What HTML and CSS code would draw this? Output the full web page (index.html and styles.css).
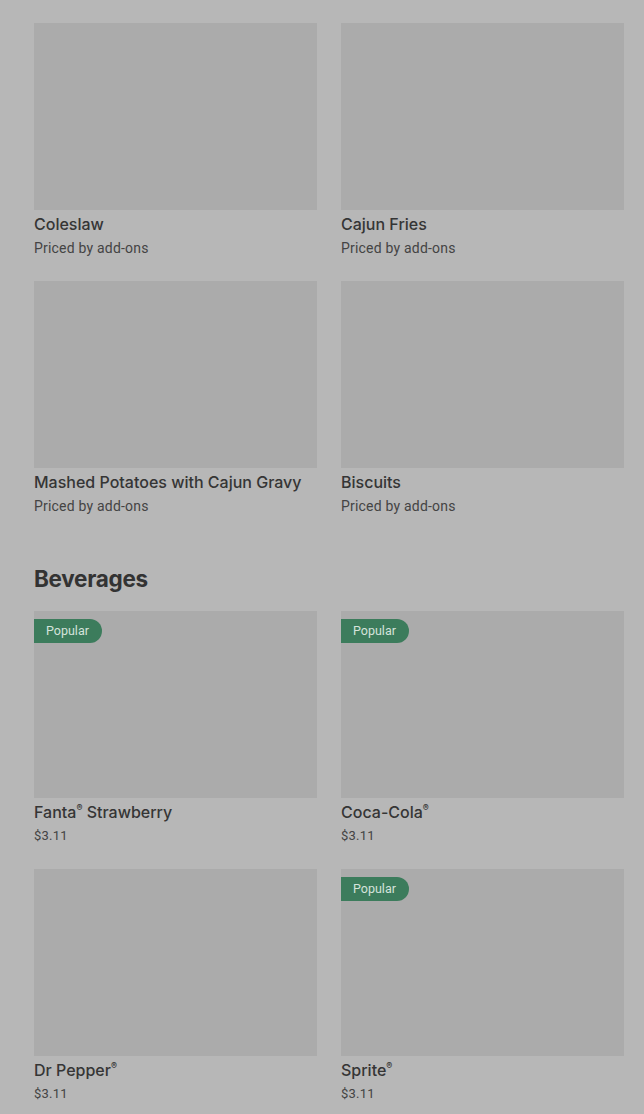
FILE: index.html
```html
<!DOCTYPE html>
<html>
<head>
<meta charset="utf-8">
<link rel="stylesheet" href="styles.css">
</head>
<body>
<main class="page">
  <section class="grid">
    <div class="card"><div class="img"></div><div class="name">Coleslaw</div><div class="sub">Priced by add-ons</div></div>
    <div class="card"><div class="img"></div><div class="name">Cajun Fries</div><div class="sub">Priced by add-ons</div></div>
    <div class="card"><div class="img"></div><div class="name">Mashed Potatoes with Cajun Gravy</div><div class="sub">Priced by add-ons</div></div>
    <div class="card"><div class="img"></div><div class="name">Biscuits</div><div class="sub">Priced by add-ons</div></div>
  </section>
  <h2 class="heading">Beverages</h2>
  <section class="grid">
    <div class="card"><div class="img"><span class="badge">Popular</span></div><div class="name">Fanta<sup>®</sup> Strawberry</div><div class="sub price">$3.11</div></div>
    <div class="card"><div class="img"><span class="badge">Popular</span></div><div class="name">Coca-Cola<sup>®</sup></div><div class="sub price">$3.11</div></div>
    <div class="card"><div class="img"></div><div class="name">Dr Pepper<sup>®</sup></div><div class="sub price">$3.11</div></div>
    <div class="card"><div class="img"><span class="badge">Popular</span></div><div class="name">Sprite<sup>®</sup></div><div class="sub price">$3.11</div></div>
  </section>
</main>
</body>
</html>
```
FILE: styles.css
```css
html, body {
  margin: 0;
  padding: 0;
  background: #b7b7b7;
}
.page {
  padding: 23px 20px 0 34px;
  font-family: Roboto, "Liberation Sans", sans-serif;
}
.grid {
  display: grid;
  grid-template-columns: 283px 283px;
  column-gap: 24px;
  row-gap: 23px;
}
.card {
  display: flex;
  flex-direction: column;
}
.img {
  height: 187px;
  background: #ababab;
  position: relative;
}
.badge {
  position: absolute;
  left: 0;
  top: 8px;
  height: 24px;
  line-height: 24px;
  padding: 0 13px 0 12px;
  background: #3c7c5c;
  color: #d5e3db;
  font-size: 12.5px;
  border-radius: 0 12px 12px 0;
}
.name {
  margin-top: 4px;
  font-family: Inter, Roboto, sans-serif;
  font-size: 16px;
  line-height: 20px;
  font-weight: 500;
  color: #353535;
}
.name sup {
  font-size: 9px;
  font-weight: 600;
  line-height: 0;
  vertical-align: 7px;
}
.sub {
  margin-top: 4px;
  font-size: 14px;
  line-height: 20px;
  color: #444444;
  letter-spacing: 0.2px;
}
.price {
  font-size: 13px;
}
.heading {
  margin: 47px 0 16px;
  font-family: Inter, Roboto, sans-serif;
  font-size: 22.5px;
  line-height: 32px;
  font-weight: 700;
  color: #333333;
  letter-spacing: -0.3px;
}
```
